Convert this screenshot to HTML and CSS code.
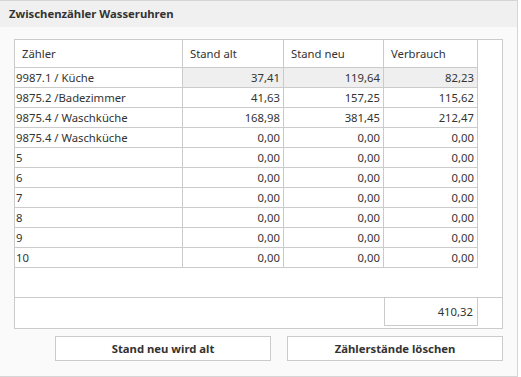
FILE: index.html
```html
<!DOCTYPE html>
<html lang="de">
<head>
    <meta charset="UTF-8">
    <title>Zwischenzähler Wasseruhren</title>
    <link rel="stylesheet" href="styles.css">
</head>
<body>
    <div class="panel">
        <div class="panel-head">Zwischenzähler Wasseruhren</div>

        <div class="panel-body">
            <div class="grid">
                <div class="grid-rows">
                    <div class="row head">
                        <div class="cell">Zähler</div>
                        <div class="cell">Stand alt</div>
                        <div class="cell">Stand neu</div>
                        <div class="cell">Verbrauch</div>
                    </div>
                    <div class="row selected">
                        <div class="cell">9987.1 / Küche</div>
                        <div class="cell num">37,41</div>
                        <div class="cell num">119,64</div>
                        <div class="cell num">82,23</div>
                    </div>
                    <div class="row">
                        <div class="cell">9875.2 /Badezimmer</div>
                        <div class="cell num">41,63</div>
                        <div class="cell num">157,25</div>
                        <div class="cell num">115,62</div>
                    </div>
                    <div class="row">
                        <div class="cell">9875.4 / Waschküche</div>
                        <div class="cell num">168,98</div>
                        <div class="cell num">381,45</div>
                        <div class="cell num">212,47</div>
                    </div>
                    <div class="row">
                        <div class="cell">9875.4 / Waschküche</div>
                        <div class="cell num">0,00</div>
                        <div class="cell num">0,00</div>
                        <div class="cell num">0,00</div>
                    </div>
                    <div class="row">
                        <div class="cell">5</div>
                        <div class="cell num">0,00</div>
                        <div class="cell num">0,00</div>
                        <div class="cell num">0,00</div>
                    </div>
                    <div class="row">
                        <div class="cell">6</div>
                        <div class="cell num">0,00</div>
                        <div class="cell num">0,00</div>
                        <div class="cell num">0,00</div>
                    </div>
                    <div class="row">
                        <div class="cell">7</div>
                        <div class="cell num">0,00</div>
                        <div class="cell num">0,00</div>
                        <div class="cell num">0,00</div>
                    </div>
                    <div class="row">
                        <div class="cell">8</div>
                        <div class="cell num">0,00</div>
                        <div class="cell num">0,00</div>
                        <div class="cell num">0,00</div>
                    </div>
                    <div class="row">
                        <div class="cell">9</div>
                        <div class="cell num">0,00</div>
                        <div class="cell num">0,00</div>
                        <div class="cell num">0,00</div>
                    </div>
                    <div class="row">
                        <div class="cell">10</div>
                        <div class="cell num">0,00</div>
                        <div class="cell num">0,00</div>
                        <div class="cell num">0,00</div>
                    </div>
                </div>

                <div class="grid-foot">
                    <div class="total">410,32</div>
                </div>
            </div>

            <div class="actions">
                <button class="btn">Stand neu wird alt</button>
                <button class="btn">Zählerstände löschen</button>
            </div>
        </div>
    </div>
</body>
</html>
```

FILE: styles.css
```css
/* Colours */
:root {
    --border: #cbcbcb;
    --panel-bg: #fafafa;
    --head-bg: #f0f0f0;
    --text: #333;
    --selected: #efefef;
}

body {
    margin: 0;
    font-family: "Noto Sans", "Open Sans", sans-serif;
    font-size: 11.3px;
    color: var(--text);
    background: white;
}

/* Outer panel */
.panel {
    width: 518px;
    height: 377px;
    box-sizing: border-box;
    border-top: 1px solid #d6d6d6;
    border-right: 1px solid #d6d6d6;
    border-bottom: 1px solid #d6d6d6;
    background: var(--panel-bg);
}

.panel-head {
    height: 26px;
    line-height: 26px;
    padding-left: 9px;
    background: var(--head-bg);
    font-weight: bold;
}

.panel-body {
    padding: 12px 0 0 14px;
}

/* Grid */
.grid {
    width: 489px;
    height: 290px;
    box-sizing: border-box;
    border: 1px solid var(--border);
    background: white;
    display: flex;
    flex-direction: column;
}

.grid-rows {
    flex: 1;
    border-bottom: 1px solid var(--border);
}

.row {
    display: grid;
    grid-template-columns: 168px 101px 100px 94px;
    height: 20px;
}

.cell {
    box-sizing: border-box;
    border-right: 1px solid var(--border);
    border-bottom: 1px solid var(--border);
    padding: 0 2px 0 1px;
    line-height: 19px;
    white-space: nowrap;
    overflow: hidden;
}

.cell.num {
    text-align: right;
    padding-right: 3px;
}

.row.head {
    height: 28px;
}

.row.head .cell {
    line-height: 27px;
    padding-left: 7px;
}

.row.selected .cell.num {
    background: var(--selected);
}

.grid-foot {
    height: 30px;
    padding-left: 369px;
}

.total {
    width: 94px;
    height: 28px;
    box-sizing: border-box;
    border: 1px solid var(--border);
    border-top: none;
    text-align: right;
    padding-right: 4px;
    line-height: 27px;
}

/* Buttons */
.actions {
    width: 489px;
    display: flex;
    justify-content: flex-end;
    gap: 16px;
    margin-top: 7px;
}

.btn {
    width: 216px;
    height: 25px;
    border: 1px solid var(--border);
    background: white;
    color: var(--text);
    font-family: inherit;
    font-size: 11.3px;
    font-weight: bold;
    cursor: pointer;
}
```
